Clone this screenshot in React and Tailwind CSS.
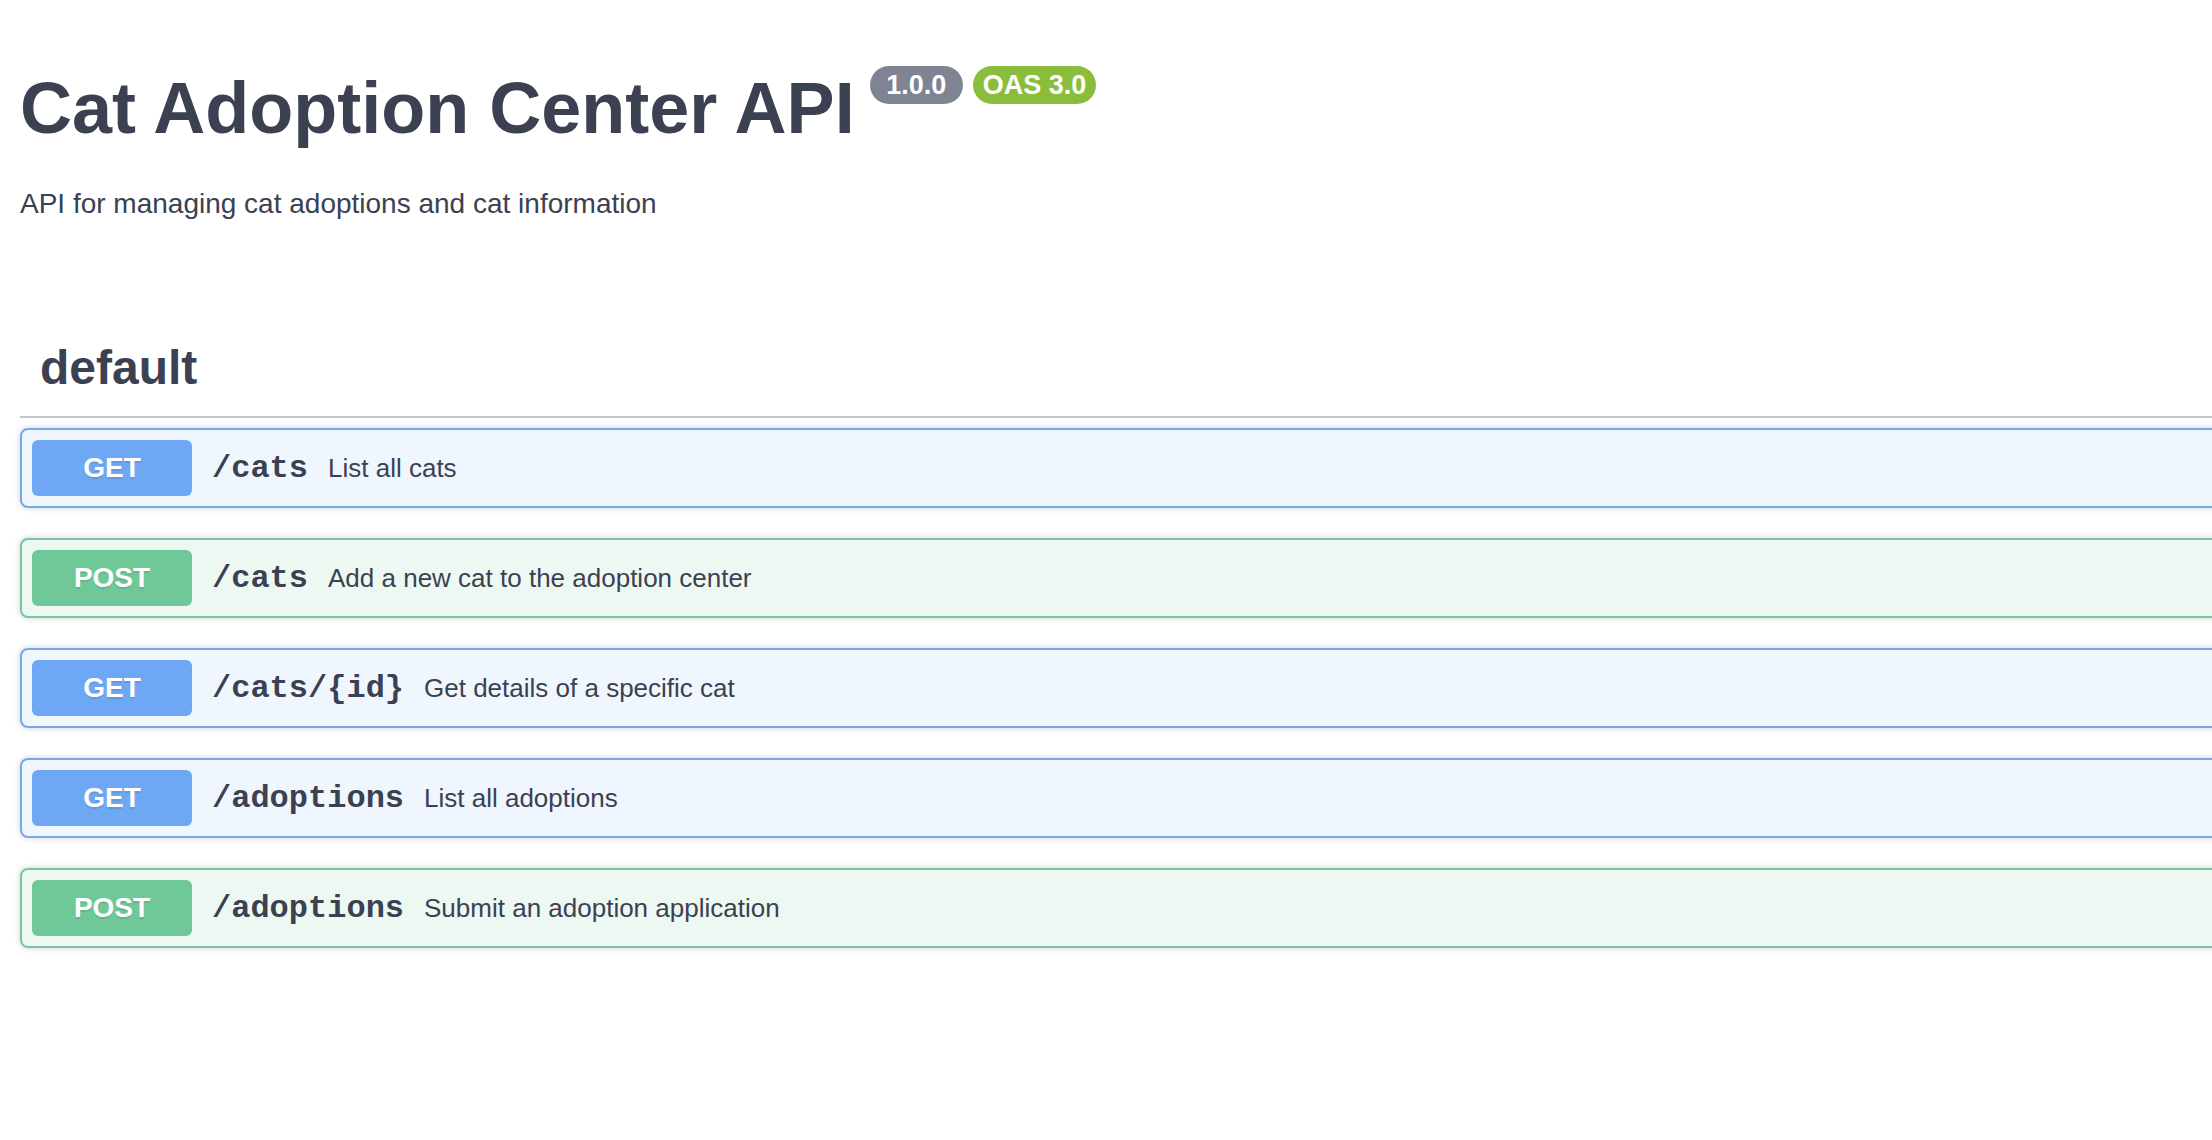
import React from "react";

const operations = [
  { method: "GET", path: "/cats", summary: "List all cats" },
  { method: "POST", path: "/cats", summary: "Add a new cat to the adoption center" },
  { method: "GET", path: "/cats/{id}", summary: "Get details of a specific cat" },
  { method: "GET", path: "/adoptions", summary: "List all adoptions" },
  { method: "POST", path: "/adoptions", summary: "Submit an adoption application" },
];

const OpBlock = ({ method, path, summary }) => {
  const isGet = method === "GET";
  return (
    <div
      className={`flex items-center p-[10px] border-2 rounded-[8px] shadow-[0_0_6px_rgba(0,0,0,0.19)] ${
        isGet ? "bg-[#eff6fe] border-[#77a8ea]" : "bg-[#eef8f3] border-[#7ac59f]"
      }`}
    >
      <span
        className={`w-[160px] h-[56px] flex items-center justify-center rounded-[6px] text-white text-[28px] font-bold leading-none [text-shadow:0_2px_0_rgba(0,0,0,0.1)] ${
          isGet ? "bg-[#6ea8f5]" : "bg-[#6fc897]"
        }`}
      >
        {method}
      </span>
      <span className="px-[20px] pt-[2px] text-[32px] font-bold leading-none font-['Liberation_Mono',monospace]">
        {path}
      </span>
      <span className="text-[26px] leading-none">{summary}</span>
    </div>
  );
};

export default function App() {
  return (
    <div className="w-[2212px] h-[1140px] overflow-hidden bg-white text-[#3b4151] font-['Liberation_Sans',Arial,sans-serif]">
      <div className="w-[2920px] px-[20px]">
        {/* Info */}
        <div className="pt-[66px] flex items-start">
          <h2 className="mt-[6px] text-[72px] leading-[72px] font-bold">Cat Adoption Center API</h2>
          <span className="ml-[15px] h-[38px] flex items-center px-[9px] rounded-full bg-[#7e8491] text-white text-[27px] font-bold leading-none whitespace-pre">
            {" 1.0.0 "}
          </span>
          <span className="ml-[10px] h-[38px] flex items-center px-[10px] rounded-full bg-[#8bbd3c] text-white text-[27px] font-bold leading-none whitespace-pre">
            OAS 3.0
          </span>
        </div>
        <p className="mt-[40px] text-[28px] leading-[40px]">
          API for managing cat adoptions and cat information
        </p>

        {/* Tag section */}
        <div className="mt-[96px] pt-[20px] pb-[20px] pl-[20px] border-b-2 border-[#c4c6cb]">
          <h3 className="text-[48px] leading-[56px] font-bold">default</h3>
        </div>
        <div className="mt-[10px] flex flex-col gap-[30px]">
          {operations.map((op, i) => (
            <OpBlock key={i} {...op} />
          ))}
        </div>
      </div>
    </div>
  );
}
